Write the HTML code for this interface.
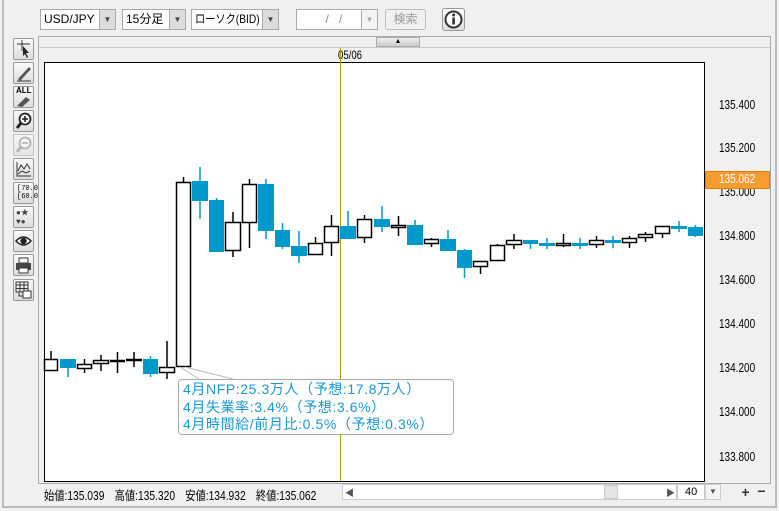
<!DOCTYPE html>
<html><head><meta charset="utf-8"><style>
*{margin:0;padding:0;box-sizing:border-box}
body{width:779px;height:511px;background:#f0f0f0;font-family:"Liberation Sans","Noto Sans CJK JP",sans-serif;position:relative;overflow:hidden;font-size:12px;color:#000}
.abs{position:absolute}
.sel{position:absolute;top:9px;height:21px;background:#fff;border:1px solid #aaa;font-size:12px;line-height:19px;padding-left:3px;white-space:nowrap;overflow:hidden}
.sel .ar{position:absolute;right:0;top:0;width:16px;height:19px;background:#dcdcdc;border-left:1px solid #aaa;font-size:8px;text-align:center;line-height:19px;color:#444}
.tb{position:absolute;left:13px;width:21px;height:22px;border:1px solid #999;background:linear-gradient(#fafafa,#dcdcdc);border-radius:2px}
.lab{position:absolute;left:719px;font-size:12.5px;font-family:"Liberation Sans",sans-serif;transform:scaleX(.8);transform-origin:left}
</style></head><body>
<div class="abs" style="left:2px;top:0;width:2px;height:508px;background:#bcbcbc"></div>
<div class="abs" style="left:2px;top:506px;width:775px;height:2px;background:#bcbcbc"></div>
<div class="abs" style="left:775px;top:0;width:2px;height:508px;background:#bcbcbc"></div>

<div class="sel" style="left:40px;width:76px">USD/JPY<div class="ar">▼</div></div>
<div class="sel" style="left:122px;width:64px">15分足<div class="ar">▼</div></div>
<div class="sel" style="left:191px;width:88px"><span style="display:inline-block;transform:scaleX(.85);transform-origin:left">ローソク(BID)</span><div class="ar">▼</div></div>
<div class="sel" style="left:296px;width:82px;color:#888;text-align:center;padding-right:16px">&nbsp;&nbsp;/&nbsp;&nbsp;&nbsp;/<div class="ar" style="background:#f4f4f4;color:#aaa">▼</div></div>
<div class="abs" style="left:385px;top:9px;width:41px;height:21px;border:1px solid #bbb;border-radius:3px;background:#f0f0f0;color:#999;text-align:center;line-height:19px">検索</div>
<div class="abs" style="left:442px;top:8px;width:23px;height:23px;border:1px solid #999;border-radius:3px;background:linear-gradient(#fff,#ddd)">
<svg width="21" height="21" viewBox="0 0 21 21"><circle cx="10.5" cy="10.5" r="8" fill="#fff" stroke="#333" stroke-width="2"/><rect x="9.3" y="8.5" width="2.6" height="7" fill="#333"/><circle cx="10.6" cy="6" r="1.5" fill="#333"/></svg></div>

<!-- toolbar -->
<div class="tb" style="top:38px"><svg width="19" height="20"><path d="M3 5H16M8 1V12" stroke="#333"/><path d="M9 7L9 17L11 15L13 19L14 18L12 14L15 14Z" fill="#222"/></svg></div>
<div class="tb" style="top:62px"><svg width="19" height="20"><path d="M4 16L15 4L17 6L6 18Z" fill="#555"/><path d="M3 18H17" stroke="#333"/></svg></div>
<div class="tb" style="top:86px"><div style="font-size:8px;font-weight:bold;line-height:8px;padding-left:2px">ALL</div><svg width="19" height="12"><path d="M3 11L12 2L16 5L8 12Z" fill="#555"/></svg></div>
<div class="tb" style="top:110px"><svg width="19" height="20"><circle cx="11" cy="8" r="5.5" fill="#fff" stroke="#222" stroke-width="1.8"/><path d="M8 8H14M11 5V11" stroke="#222" stroke-width="1.6"/><path d="M7 12L3 17" stroke="#222" stroke-width="3"/></svg></div>
<div class="tb" style="top:134px;opacity:.5"><svg width="19" height="20"><circle cx="11" cy="8" r="5.5" fill="#fff" stroke="#777" stroke-width="1.8"/><path d="M8 8H14" stroke="#777" stroke-width="1.6"/><path d="M7 12L3 17" stroke="#777" stroke-width="3"/></svg></div>
<div class="tb" style="top:158px"><svg width="19" height="20"><path d="M3 3V17H17" stroke="#333" fill="none"/><path d="M4 12L7 6L10 10L13 5L16 10" stroke="#333" fill="none"/><path d="M4 15L8 12L12 14L16 12" stroke="#333" fill="none"/></svg></div>
<div class="tb" style="top:182px;font-size:7px;line-height:8px;padding:2px 0 0 3px;font-family:'Liberation Mono',monospace">[70.0<br>[60.0</div>
<div class="tb" style="top:206px;font-size:8px;line-height:9px;padding:1px 0 0 2px;color:#444">●★<br>♥●</div>
<div class="tb" style="top:230px"><svg width="19" height="20"><path d="M2 10Q9.5 2 17 10Q9.5 18 2 10Z" fill="#fff" stroke="#222" stroke-width="1.5"/><circle cx="9.5" cy="10" r="3.2" fill="#222"/></svg></div>
<div class="tb" style="top:254px"><svg width="19" height="20"><rect x="5" y="3" width="9" height="5" fill="#fff" stroke="#333"/><rect x="2" y="8" width="15" height="7" fill="#444"/><rect x="5" y="13" width="9" height="5" fill="#fff" stroke="#333"/></svg></div>
<div class="tb" style="top:279px"><svg width="19" height="20"><path d="M2 2H14V12H2ZM2 5H14M2 8.5H14M6 2V12M10 2V12" stroke="#333" fill="none"/><rect x="9" y="11" width="8" height="7" fill="#fff" stroke="#333"/><path d="M5 13V16H9" stroke="#333" fill="none"/></svg></div>

<!-- chart frame -->
<div class="abs" style="left:38px;top:36px;width:733px;height:448px;border:1px solid #aaa;background:#f0f0f0"></div>
<div class="abs" style="left:39px;top:47px;width:731px;height:1px;background:#c8c8c8"></div>
<div class="abs" style="left:376px;top:37px;width:44px;height:10px;background:linear-gradient(#eee,#ccc);border:1px solid #aaa;font-size:7px;text-align:center;line-height:8px">▲</div>
<div class="abs" style="left:338px;top:48px;font-size:12px;transform:scaleX(.8);transform-origin:left">05/06</div>
<div class="abs" style="left:44px;top:62px;width:661px;height:420px;background:#fff;border:1.5px solid #000"></div>

<svg class="abs" style="left:0;top:0" width="779" height="511">
<line x1="340.5" y1="48" x2="340.5" y2="481" stroke="#a8a800" stroke-width="1"/>
<g stroke-width="1.5">
<g stroke="#000">
<line x1="51" y1="351" x2="51" y2="371"/><line x1="84.5" y1="359" x2="84.5" y2="373"/><line x1="101" y1="355" x2="101" y2="371"/>
<line x1="117.5" y1="352" x2="117.5" y2="373"/><line x1="134" y1="352" x2="134" y2="367"/><line x1="167" y1="341" x2="167" y2="379"/>
<line x1="183.5" y1="177" x2="183.5" y2="367"/><line x1="233" y1="212" x2="233" y2="257"/><line x1="249.5" y1="179" x2="249.5" y2="248"/>
<line x1="315.5" y1="237" x2="315.5" y2="255"/><line x1="331.5" y1="215" x2="331.5" y2="256"/><line x1="364.5" y1="215" x2="364.5" y2="243"/>
<line x1="398.5" y1="216" x2="398.5" y2="236"/><line x1="431.5" y1="238" x2="431.5" y2="247"/><line x1="480.5" y1="261" x2="480.5" y2="274"/>
<line x1="497.5" y1="244" x2="497.5" y2="261"/><line x1="514" y1="234" x2="514" y2="249"/><line x1="563.5" y1="234" x2="563.5" y2="247"/>
<line x1="596.5" y1="236" x2="596.5" y2="248"/><line x1="629.5" y1="236" x2="629.5" y2="248"/><line x1="645.5" y1="232" x2="645.5" y2="242"/>
<line x1="662.5" y1="226" x2="662.5" y2="238"/>
<line x1="110" y1="361" x2="125" y2="361" stroke-width="2.5"/><line x1="126" y1="360" x2="142" y2="360" stroke-width="2.5"/>
</g>
<g stroke="#0099cc">
<line x1="68" y1="359" x2="68" y2="377"/><line x1="150.5" y1="356" x2="150.5" y2="377"/><line x1="200" y1="167" x2="200" y2="219"/>
<line x1="216.5" y1="198" x2="216.5" y2="252"/><line x1="266" y1="179" x2="266" y2="239"/><line x1="282.5" y1="223" x2="282.5" y2="249"/>
<line x1="299" y1="231" x2="299" y2="263"/><line x1="348" y1="211" x2="348" y2="239"/><line x1="382" y1="206" x2="382" y2="232"/>
<line x1="415" y1="220" x2="415" y2="245"/><line x1="448" y1="230" x2="448" y2="251"/><line x1="464.5" y1="249" x2="464.5" y2="278"/>
<line x1="530.5" y1="240" x2="530.5" y2="249"/><line x1="547" y1="238" x2="547" y2="249"/><line x1="580" y1="238" x2="580" y2="249"/>
<line x1="613" y1="236" x2="613" y2="248"/><line x1="679" y1="221" x2="679" y2="232"/><line x1="695.5" y1="225" x2="695.5" y2="237"/>
</g>
<g fill="#fff" stroke="#000">
<rect x="44.5" y="359.5" width="13" height="11"/><rect x="77.5" y="364.5" width="14" height="4"/><rect x="93.5" y="360.5" width="15" height="3"/>
<rect x="159.5" y="367.5" width="15" height="5"/><rect x="176.5" y="182.5" width="14" height="184"/><rect x="225.5" y="222.5" width="15" height="28"/>
<rect x="242.5" y="184.5" width="14" height="38"/><rect x="308.5" y="243.5" width="14" height="11"/><rect x="324.5" y="226.5" width="14" height="16"/>
<rect x="357.5" y="219.5" width="14" height="18"/><rect x="391.5" y="225.5" width="14" height="2"/><rect x="424.5" y="239.5" width="14" height="4"/>
<rect x="473.5" y="261.5" width="14" height="5"/><rect x="490.5" y="245.5" width="14" height="15"/><rect x="506.5" y="240.5" width="15" height="4"/>
<rect x="556.5" y="243.5" width="14" height="2"/><rect x="589.5" y="240.5" width="14" height="4"/><rect x="622.5" y="238.5" width="14" height="4"/>
<rect x="638.5" y="234.5" width="14" height="3"/><rect x="655.5" y="226.5" width="14" height="7"/>
</g>
</g>
<g fill="#0099cc">
<rect x="60" y="359" width="16" height="9"/><rect x="143" y="359" width="15" height="15"/><rect x="192" y="181" width="16" height="20"/>
<rect x="209" y="200" width="15" height="52"/><rect x="258" y="184" width="16" height="47"/><rect x="275" y="230" width="15" height="17"/>
<rect x="291" y="246" width="16" height="10"/><rect x="340" y="226" width="16" height="13"/><rect x="374" y="219" width="16" height="8"/>
<rect x="407" y="225" width="16" height="20"/><rect x="440" y="239" width="16" height="12"/><rect x="457" y="250" width="15" height="18"/>
<rect x="523" y="240" width="15" height="4"/><rect x="539" y="243" width="16" height="3"/><rect x="572" y="243" width="16" height="3"/>
<rect x="605" y="240" width="16" height="3"/><rect x="671" y="226" width="16" height="3"/><rect x="688" y="227" width="15" height="9"/>
</g>
<path d="M185 367L233 379" stroke="#bbb" fill="none"/>
<path d="M180 367L199 379" stroke="#bbb" fill="none"/>
</svg>

<div class="abs" style="left:178px;top:379px;width:276px;height:56px;background:#fff;border:1px solid #aaa;border-radius:4px;color:#1a96d2;font-size:14px;line-height:17.5px;padding:1px 0 0 4px;white-space:nowrap;letter-spacing:0.6px;overflow:hidden">4月NFP:25.3万人（予想:17.8万人）<br>4月失業率:3.4%（予想:3.6%）<br>4月時間給/前月比:0.5%（予想:0.3%）</div>

<div class="lab" style="top:98px">135.400</div>
<div class="lab" style="top:141px">135.200</div>
<div class="lab" style="top:185px">135.000</div>
<div class="lab" style="top:229px">134.800</div>
<div class="lab" style="top:273px">134.600</div>
<div class="lab" style="top:317px">134.400</div>
<div class="lab" style="top:361px">134.200</div>
<div class="lab" style="top:405px">134.000</div>
<div class="lab" style="top:450px">133.800</div>
<div class="abs" style="left:705px;top:171px;width:65px;height:18px;background:#f89c30;border:1px solid #e07e10"></div>
<div class="lab" style="top:172px;color:#fff">135.062</div>

<!-- bottom bar -->
<div class="abs" style="left:44px;top:485px;font-size:12.5px;transform:scaleX(.82);transform-origin:left;white-space:nowrap;word-spacing:9px">始値:135.039 高値:135.320 安値:134.932 終値:135.062</div>
<div class="abs" style="left:342px;top:484px;width:335px;height:16px;background:#fff;border:1px solid #ccc"></div>
<div class="abs" style="left:345px;top:486px;font-size:9px;color:#555">◀</div>
<div class="abs" style="left:604px;top:485px;width:14px;height:14px;background:#e4e4e4;border:1px solid #ccc"></div>
<div class="abs" style="left:666px;top:486px;font-size:9px;color:#555">▶</div>
<div class="abs" style="left:677px;top:484px;width:28px;height:16px;background:#fff;border:1px solid #ccc;font-size:11px;line-height:14px;padding-left:7px">40</div>
<div class="abs" style="left:705px;top:484px;width:16px;height:16px;background:#f4f4f4;border:1px solid #ccc;font-size:8px;text-align:center;line-height:14px;color:#555">▼</div>
<div class="abs" style="left:738px;top:484px;width:15px;height:16px;font-size:14px;font-weight:bold;text-align:center;line-height:16px;color:#333">+</div>
<div class="abs" style="left:754px;top:484px;width:15px;height:16px;font-size:14px;font-weight:bold;text-align:center;line-height:15px;color:#333">−</div>
</body></html>
